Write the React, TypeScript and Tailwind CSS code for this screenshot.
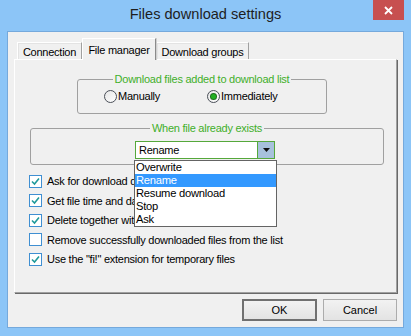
import React from 'react';

const tabs = [
    { label: 'Connection', width: 'w-[65px]', active: false },
    { label: 'File manager', width: 'w-[74px]', active: true },
    { label: 'Download groups', width: 'w-[93px]', active: false },
];

const options = ['Overwrite', 'Rename', 'Resume download', 'Stop', 'Ask'];

const checks = [
    { label: 'Ask for download destination folder', checked: true },
    { label: 'Get file time and date from server', checked: true },
    { label: 'Delete together with file', checked: true },
    { label: 'Remove successfully downloaded files from the list', checked: false },
    { label: 'Use the "fi!" extension for temporary files', checked: true },
];

const Radio = ({ checked, label }: { checked: boolean; label: string }) => (
    <div className="flex items-center">
        <span className="w-[13px] h-[13px] rounded-full border border-[#4a4f58] bg-gradient-to-br from-[#e6e6e6] to-white flex items-center justify-center">
            {checked && <span className="w-[5px] h-[5px] rounded-full bg-[#22b022] ring-1 ring-[#1f6f1f]" />}
        </span>
        <span className="ml-[1px]">{label}</span>
    </div>
);

const Checkbox = ({ checked, label }: { checked: boolean; label: string }) => (
    <div className="flex items-center h-[19.5px]">
        <span className="w-[13px] h-[13px] border border-[#3f8fd2] bg-white flex items-center justify-center">
            {checked && (
                <svg width="9" height="9" viewBox="0 0 9 9">
                    <path d="M1 4.5 L3.5 7 L8 1.5" fill="none" stroke="#1f9a9a" strokeWidth="1.6" />
                </svg>
            )}
        </span>
        <span className="ml-[5px] whitespace-nowrap">{label}</span>
    </div>
);

const App: React.FC = () => {
    const legend = "mx-auto px-[2px] text-[#3faf2a] leading-[13px]";

    return (
        <div className="w-[411px] h-[336px] bg-[#8cc5f7] flex flex-col font-['Liberation_Sans',Arial,sans-serif] text-[11px] tracking-[-0.25px] text-black overflow-hidden">
            <div className="relative h-[31px] flex items-center justify-center">
                <span className="text-[14.6px] tracking-normal text-[#1e1e1e] pb-[1px]">Files download settings</span>
                <div className="absolute right-[7px] top-0 w-[31px] h-[20px] bg-[#c75050] flex items-center justify-center">
                    <svg width="9" height="9" viewBox="0 0 9 9">
                        <path d="M1 1 L8 8 M8 1 L1 8" stroke="white" strokeWidth="1.8" />
                    </svg>
                </div>
            </div>

            <div className="mx-[7px] mb-[8px] flex-1 border border-[#75a9dc] bg-[#f0f0f0] flex flex-col pt-[6px] px-[6px]">
                <div className="flex items-end h-[21px] ml-[3px]">
                    {tabs.map((t) =>
                        t.active ? (
                            <div key={t.label} className={`${t.width} h-[22px] -mb-[1px] z-10 bg-[#f0f0f0] border-l border-t border-white border-r border-r-[#8a8a8a] shadow-[1px_0_0_#d0d0d0] flex items-start justify-center pt-[3px]`}>
                                {t.label}
                            </div>
                        ) : (
                            <div key={t.label} className={`${t.width} h-[17px] bg-[#f0f0f0] border-l border-t border-white border-r border-r-[#a0a0a0] shadow-[inset_1px_1px_0_#e3e3e3] flex items-center justify-center pt-[2px]`}>
                                {t.label}
                            </div>
                        )
                    )}
                </div>

                <div className="h-[234px] border-l border-t border-white border-r border-b border-r-[#a0a0a0] border-b-[#a0a0a0] shadow-[1px_1px_0_#696969] flex flex-col">
                    <fieldset className="ml-[62px] mt-[13px] w-[250px] h-[41px] border border-[#a0a0a0] rounded-[3px] px-0">
                        <legend className={legend}>Download files added to download list</legend>
                        <div className="flex items-center mt-[2px] ml-[26px]">
                            <div className="w-[103px]">
                                <Radio checked={false} label="Manually" />
                            </div>
                            <Radio checked label="Immediately" />
                        </div>
                    </fieldset>

                    <fieldset className="ml-[15px] mt-[8px] w-[354px] h-[43px] border border-[#a0a0a0] rounded-[3px] px-0">
                        <legend className={legend}>When file already exists</legend>
                        <div className="relative ml-[104px] mt-[6px] w-[140px] h-[18px] border border-[#55a83b] bg-white flex">
                            <div className="flex-1 flex items-center pl-[3px] text-[11px]">Rename</div>
                            <div className="w-[17px] border-l border-[#55a83b] bg-[#a7c1dc] flex items-center justify-center">
                                <svg width="7" height="4" viewBox="0 0 7 4">
                                    <path d="M0 0 H7 L3.5 4 Z" fill="#111" />
                                </svg>
                            </div>
                            <ul className="absolute z-20 left-[-2px] top-[18px] w-[143px] h-[67px] bg-white border border-[#646464] text-[11.2px] leading-[13px]">
                                {options.map((o) => (
                                    <li key={o} className={`h-[13px] pl-[1px] ${o === 'Rename' ? 'bg-[#3399ff] text-white' : ''}`}>
                                        {o}
                                    </li>
                                ))}
                            </ul>
                        </div>
                    </fieldset>

                    <div className="mt-[6.5px] ml-[14px] flex flex-col">
                        {checks.map((c) => (
                            <Checkbox key={c.label} checked={c.checked} label={c.label} />
                        ))}
                    </div>
                </div>

                <div className="flex justify-end gap-[6px] mt-[6px]">
                    <button className="w-[75px] h-[22px] border-2 border-[#707070] bg-gradient-to-b from-[#f2f2f2] to-[#e3e3e3] tracking-normal">OK</button>
                    <button className="w-[74px] h-[22px] border border-[#acacac] bg-gradient-to-b from-[#f2f2f2] to-[#e3e3e3] tracking-normal">Cancel</button>
                </div>
            </div>
        </div>
    );
};

export default App;
